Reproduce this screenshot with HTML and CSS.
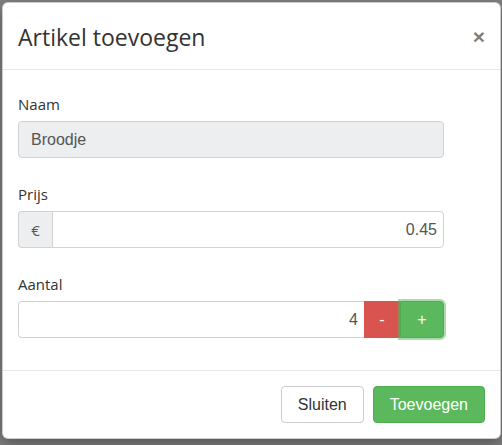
FILE: index.html
```html
<!DOCTYPE html>
<html>
<head>
<meta charset="utf-8">
<link rel="stylesheet" href="styles.css">
</head>
<body>
<div class="modal">
  <div class="modal-header">
    <h4 class="modal-title">Artikel toevoegen</h4>
    <button class="close" type="button">×</button>
  </div>
  <div class="modal-body">
    <div class="form-group">
      <label class="label">Naam</label>
      <input class="control control-disabled w-full" type="text" value="Broodje" disabled>
    </div>
    <div class="form-group">
      <label class="label">Prijs</label>
      <div class="input-group w-full">
        <span class="addon">€</span>
        <input class="control control-right control-grow grp-last" type="text" value="0.45">
      </div>
    </div>
    <div class="form-group">
      <label class="label">Aantal</label>
      <div class="input-group w-full">
        <input class="control control-right control-grow grp-first" type="text" value="4">
        <button class="btn btn-danger btn-minus" type="button">-</button>
        <button class="btn btn-success btn-plus" type="button">+</button>
      </div>
    </div>
  </div>
  <div class="modal-footer">
    <button class="btn btn-default btn-lg-pad" type="button">Sluiten</button>
    <button class="btn btn-success btn-lg-pad" type="button">Toevoegen</button>
  </div>
</div>
</body>
</html>
```
FILE: styles.css
```css
html, body {
  margin: 0;
  padding: 0;
}
body {
  background: #808080;
  height: 445px;
  overflow: hidden;
  font-family: "Open Sans", "Liberation Sans", sans-serif;
  color: #333;
}
.modal {
  margin: 2px 0 0 2px;
  width: 499px;
  box-sizing: border-box;
  background: #fff;
  border: 1px solid rgba(0, 0, 0, 0.2);
  border-radius: 6px;
  box-shadow: 0 5px 15px rgba(0, 0, 0, 0.35);
}
.modal-header {
  display: flex;
  align-items: center;
  justify-content: space-between;
  padding: 16px 15px 14px 15px;
  border-bottom: 1px solid #e5e5e5;
}
.modal-title {
  margin: 0;
  font-size: 23px;
  font-weight: 400;
  line-height: 36px;
  color: #333;
}
.close {
  border: 0;
  background: transparent;
  padding: 0;
  margin: 0 0 2px 0;
  font-family: "Liberation Sans", Arial, sans-serif;
  font-size: 21px;
  font-weight: 700;
  line-height: 1;
  color: #000;
  opacity: 0.5;
}
.modal-body {
  display: flex;
  flex-direction: column;
  gap: 25px;
  padding: 23px 15px 32px 15px;
}
.form-group {
  display: flex;
  flex-direction: column;
}
.label {
  display: block;
  font-size: 15px;
  line-height: 23px;
  margin-bottom: 5px;
  color: #333;
}
.w-full {
  width: 426px;
}
.control {
  box-sizing: border-box;
  height: 37px;
  margin: 0;
  padding: 6px 12px;
  font-family: "Liberation Sans", Arial, sans-serif;
  font-size: 16px;
  color: #555;
  background: #fff;
  border: 1px solid #d2d2d2;
  border-radius: 4px;
  outline: none;
}
.control-disabled {
  background: #eceeef;
  color: #555;
  -webkit-text-fill-color: #555;
  opacity: 1;
}
.control-right {
  text-align: right;
  padding-right: 6px;
}
.control-grow {
  flex: 1;
  min-width: 0;
}
.input-group {
  display: flex;
  height: 37px;
}
.addon {
  box-sizing: border-box;
  width: 34px;
  display: flex;
  align-items: center;
  justify-content: center;
  background: #eceeef;
  border: 1px solid #d2d2d2;
  border-right: 0;
  border-radius: 4px 0 0 4px;
  font-size: 15px;
  color: #555;
}
.grp-last {
  border-radius: 0 4px 4px 0;
}
.grp-first {
  border-radius: 4px 0 0 4px;
  border-right: 0;
}
.btn {
  box-sizing: border-box;
  height: 37px;
  margin: 0;
  font-family: "Liberation Sans", Arial, sans-serif;
  font-size: 16px;
  line-height: 1;
  border: 1px solid transparent;
  border-radius: 4px;
  cursor: pointer;
}
.btn-default {
  background: #fff;
  border-color: #ccc;
  color: #333;
}
.btn-success {
  background: #5cb85c;
  border-color: #4cae4c;
  color: #fff;
}
.btn-danger {
  background: #d9534f;
  border-color: #d9534f;
  color: #fff;
}
.btn-minus {
  width: 36px;
  border-radius: 0;
  padding: 0;
}
.btn-plus {
  width: 44px;
  padding: 0;
  border-radius: 0 4px 4px 0;
  box-shadow: 0 0 0 2px rgba(92, 184, 92, 0.5);
  position: relative;
}
.btn-lg-pad {
  padding: 0 16px;
}
.modal-footer {
  display: flex;
  justify-content: flex-end;
  gap: 9px;
  padding: 15px;
  border-top: 1px solid #e5e5e5;
}
```
